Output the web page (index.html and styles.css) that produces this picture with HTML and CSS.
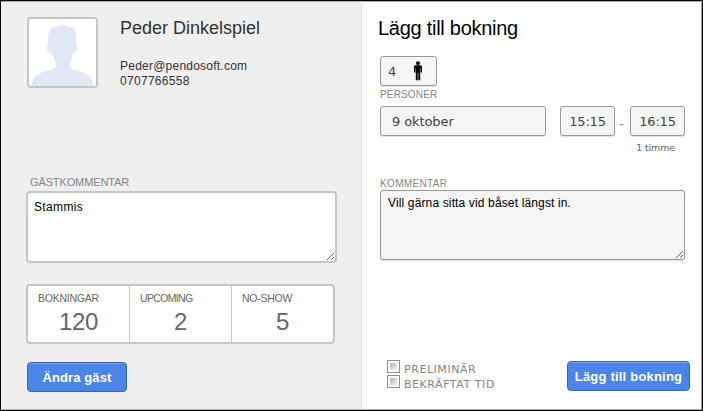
FILE: index.html
```html
<!DOCTYPE html>
<html lang="sv">
    <head>
        <meta charset="utf-8">
        <title>Bokning</title>
        <link rel="stylesheet" href="styles.css">
    </head>
    <body>
        <div class="window">
            <div class="guest">
                <div class="profile">
                    <div class="avatar">
                        <svg width="67" height="67" viewBox="0 0 67 67">
                            <path fill="#e0e8f6" d="M3 67C3 57 8 55 17 52C26 50 27 48 27 45C27 41 25 40 23 35C17 34 16 27 19 25C19 14 20 9 26 8C29 8 31 6 36 6L38 8H42C47 9 47 14 47 25C50 27 49 34 44 35C43 39 41 41 41 45C41 49 43 50 52 53C61 56 64 59 64 67Z"/>
                        </svg>
                    </div>
                    <div class="contact">
                        <h2 class="name">Peder Dinkelspiel</h2>
                        <div>Peder@pendosoft.com</div>
                        <div class="phone">0707766558</div>
                    </div>
                </div>
                <label class="guest-label" for="guestcomment">GÄSTKOMMENTAR</label>
                <textarea class="guest-comment" id="guestcomment">Stammis</textarea>
                <div class="stats">
                    <div class="stat"><span class="stat-label">BOKNINGAR</span><span class="stat-value">120</span></div>
                    <div class="stat"><span class="stat-label upcoming">UPCOMING</span><span class="stat-value">2</span></div>
                    <div class="stat"><span class="stat-label">NO-SHOW</span><span class="stat-value">5</span></div>
                </div>
                <button class="button edit" type="button">Ändra gäst</button>
            </div>
            <form class="booking">
                <h1 class="title">Lägg till bokning</h1>
                <div class="field persons">
                    <span>4</span>
                    <svg width="10" height="20" viewBox="0 0 10 20">
                        <circle cx="5" cy="2.2" r="1.9"/>
                        <path d="M2.5 4.3H7.5Q9 4.3 9 6V11.5H7.6V7H7.2V19.2H5.3V12H4.7V19.2H2.8V7H2.4V11.5H1V6Q1 4.3 2.5 4.3Z"/>
                    </svg>
                </div>
                <div class="small-label">PERSONER</div>
                <div class="when">
                    <div class="field date">9 oktober</div>
                    <div class="field time">15:15</div>
                    <span class="dash">-</span>
                    <div class="field time">16:15</div>
                </div>
                <div class="duration">1 timme</div>
                <label class="small-label comment-label" for="comment">KOMMENTAR</label>
                <textarea class="comment" id="comment">Vill gärna sitta vid båset längst in.</textarea>
                <div class="bottom">
                    <div class="checks">
                        <label class="check"><input class="box" type="checkbox">PRELIMINÄR</label>
                        <label class="check"><input class="box" type="checkbox">BEKRÄFTAT TID</label>
                    </div>
                    <button class="button add" type="button">Lägg till bokning</button>
                </div>
            </form>
        </div>
    </body>
</html>
```
FILE: styles.css
```css
* { box-sizing: border-box; }
body { margin: 0; font-family: "Liberation Sans", Arial, sans-serif; font-size: 12px; color: #333; }
h1, h2 { margin: 0; font-weight: normal; }
textarea { display: block; font-family: inherit; font-size: 12px; line-height: 15px; color: #000; resize: both; outline: none; }

.window { display: flex; width: 703px; height: 411px; border: 1px solid #000; box-shadow: inset 0 1px #aaa, inset 0 -1px #aaa, inset -1px 0 #aaa; overflow: hidden; }
.guest { width: 361px; padding: 16px 0 0 25px; background: #efefef; border-right: 1px solid #e2e2e2; box-shadow: inset 0 1px #aaa, inset 0 -1px #aaa; }
.profile { display: flex; height: 71px; margin-left: 1px; }
.avatar { width: 71px; height: 71px; border: 2px solid #c6c6c6; border-radius: 4px; background: #fff; overflow: hidden; }
.avatar svg { display: block; }
.contact { margin-left: 22px; line-height: 15px; letter-spacing: 0.23px; }
.name { height: 42px; font-size: 18px; line-height: 22px; letter-spacing: 0; }
.phone { letter-spacing: 0.3px; }

.guest-label { display: block; margin: 88px 0 0 4px; height: 15px; font-size: 11px; line-height: 13px; letter-spacing: -0.12px; color: #858585; }
.guest-comment { width: 311px; height: 72px; padding: 7px 6px; border: 2px solid #c6c6c6; border-radius: 4px; background: #fff; letter-spacing: 0.35px; }
.stats { display: flex; width: 309px; height: 60px; margin-top: 21px; border: 2px solid #c6c6c6; border-radius: 4px; background: #fff; color: #666; }
.stat { flex: 1; padding: 5px 0 0 10px; border-left: 1px solid #c6c6c6; }
.stat:first-child { border-left: none; }
.stat-label { display: block; font-size: 10.5px; line-height: 14px; letter-spacing: -0.25px; }
.upcoming { letter-spacing: -0.65px; }
.stat-value { display: block; margin-left: -10px; font-size: 24px; line-height: 33px; letter-spacing: -0.4px; text-align: center; }

.button { height: 30px; padding: 0; border: 1px solid #3566b5; border-radius: 4px; background: #4b85e8; box-shadow: inset 0 1px #76a3f0; color: #fff; font-family: inherit; font-size: 13px; font-weight: bold; letter-spacing: 0.1px; }
.edit { display: block; width: 100px; margin: 18px 0 0 1px; }
.add { width: 123px; margin-top: 1px; letter-spacing: 0.2px; }

.booking { width: 340px; padding: 16px 0 0 18px; }
.title { height: 39px; margin-left: -2px; font-size: 20px; line-height: 23px; letter-spacing: -0.27px; color: #000; }
.field { height: 30px; border: 1px solid #999; border-radius: 3px; background: #f5f5f5; box-shadow: 0 1px 1px #ddd; font-family: "DejaVu Sans", Verdana, sans-serif; font-size: 13px; line-height: 29px; color: #444; }
.persons { display: flex; width: 57px; padding: 0 13px 0 7px; justify-content: space-between; }
.persons svg { margin-top: 4px; fill: #000; }
.small-label { display: block; height: 20px; font-size: 10px; line-height: 18px; letter-spacing: 0.15px; color: #858585; }
.when { display: flex; height: 30px; }
.date { width: 166px; margin-right: 14px; padding-left: 11px; letter-spacing: -0.1px; }
.time { width: 55px; text-align: center; letter-spacing: -0.2px; }
.dash { width: 15px; padding-right: 2px; line-height: 36px; text-align: center; color: #777; }
.duration { width: 295px; height: 36px; font-family: "DejaVu Sans", Verdana, sans-serif; font-size: 9.5px; line-height: 24px; letter-spacing: -0.15px; text-align: right; color: #666; }
.comment-label { height: 18px; letter-spacing: 0.35px; line-height: 23px; }
.comment { width: 305px; height: 70px; padding: 5px 7px; border: 1px solid #999; border-radius: 3px; background: #f5f5f5; box-shadow: 0 1px 1px #ddd; letter-spacing: 0.14px; }
.bottom { display: flex; width: 310px; margin-top: 100px; justify-content: space-between; }
.checks { padding-left: 7px; }
.check { display: flex; height: 15px; font-family: "DejaVu Sans", Verdana, sans-serif; font-size: 11px; line-height: 19px; letter-spacing: 0.55px; color: #858585; }
.box { appearance: none; width: 13px; height: 13px; margin: 0 4px 0 0; border: 1px solid #8e8f8f; background: linear-gradient(135deg, #aeb3b9, #f6f6f6) content-box #f4f4f4; padding: 2px; }
```
